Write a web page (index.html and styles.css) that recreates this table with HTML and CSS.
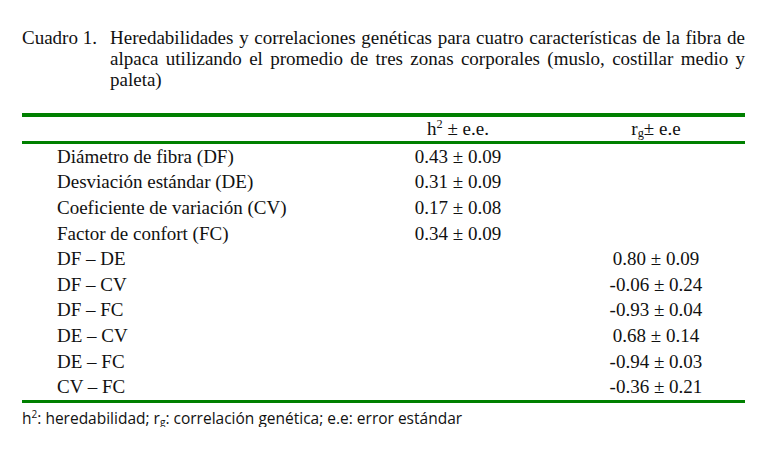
FILE: index.html
```html
<!DOCTYPE html>
<html lang="es">
<head>
<meta charset="utf-8">
<title>Cuadro 1</title>
<link rel="stylesheet" href="styles.css">
</head>
<body>
<div class="page">
  <div class="caption">
    <div class="label">Cuadro 1.</div>
    <div class="title">Heredabilidades y correlaciones genéticas para cuatro características de la fibra de alpaca utilizando el promedio de tres zonas corporales (muslo, costillar medio y paleta)</div>
  </div>
  <div class="table">
    <div class="row head">
      <div class="c1"></div>
      <div class="c2">h<sup>2</sup> ± e.e.</div>
      <div class="c3">r<sub>g</sub>± e.e</div>
    </div>
    <div class="body">
      <div class="row"><div class="c1">Diámetro de fibra (DF)</div><div class="c2">0.43 ± 0.09</div><div class="c3"></div></div>
      <div class="row"><div class="c1">Desviación estándar (DE)</div><div class="c2">0.31 ± 0.09</div><div class="c3"></div></div>
      <div class="row"><div class="c1">Coeficiente de variación (CV)</div><div class="c2">0.17 ± 0.08</div><div class="c3"></div></div>
      <div class="row"><div class="c1">Factor de confort (FC)</div><div class="c2">0.34 ± 0.09</div><div class="c3"></div></div>
      <div class="row"><div class="c1">DF – DE</div><div class="c2"></div><div class="c3">0.80 ± 0.09</div></div>
      <div class="row"><div class="c1">DF – CV</div><div class="c2"></div><div class="c3">-0.06 ± 0.24</div></div>
      <div class="row"><div class="c1">DF – FC</div><div class="c2"></div><div class="c3">-0.93 ± 0.04</div></div>
      <div class="row"><div class="c1">DE – CV</div><div class="c2"></div><div class="c3">0.68 ± 0.14</div></div>
      <div class="row"><div class="c1">DE – FC</div><div class="c2"></div><div class="c3">-0.94 ± 0.03</div></div>
      <div class="row"><div class="c1">CV – FC</div><div class="c2"></div><div class="c3">-0.36 ± 0.21</div></div>
    </div>
  </div>
  <div class="note">h<sup>2</sup>: heredabilidad; r<sub>g</sub>: correlación genética; e.e: error estándar</div>
</div>
</body>
</html>
```

FILE: styles.css
```css
html, body {
  margin: 0;
  padding: 0;
  background: #ffffff;
}
.page {
  width: 723px;
  padding: 27px 0 0 22px;
  font-family: "Liberation Serif", "Times New Roman", serif;
  font-size: 19px;
  color: #111;
}
.caption {
  display: flex;
  line-height: 21px;
}
.label {
  flex: 0 0 88px;
}
.title {
  flex: 1;
  text-align: justify;
}
.table {
  margin-top: 23px;
  border-top: 4px solid #008000;
  border-bottom: 3px solid #008000;
}
.row {
  display: grid;
  grid-template-columns: 348px 176px 199px;
  height: 25.6px;
  align-items: center;
  line-height: 20px;
}
.row.head {
  height: 24px;
  border-bottom: 3px solid #008000;
}
.c1 {
  padding-left: 35px;
  white-space: nowrap;
}
.c2 {
  text-align: center;
}
.c3 {
  text-align: center;
  padding-left: 21px;
}
sup {
  font-size: 0.65em;
  vertical-align: 0.55em;
  line-height: 0;
}
sub {
  font-size: 0.65em;
  vertical-align: -0.2em;
  line-height: 0;
}
.note {
  margin-top: 6px;
  font-family: "Open Sans", "Noto Sans", sans-serif;
  font-size: 15.5px;
  line-height: 18px;
  color: #111;
}
```
